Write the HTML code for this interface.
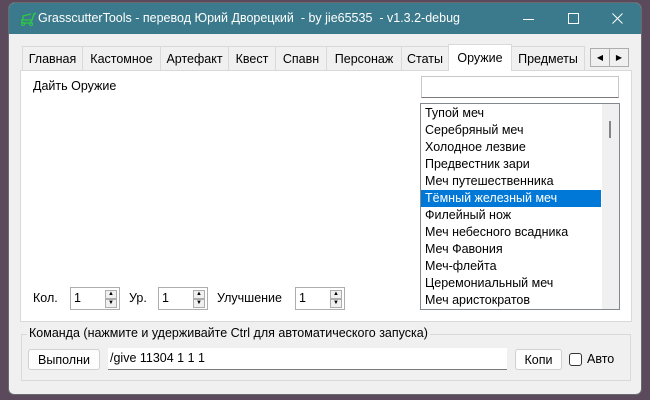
<!DOCTYPE html>
<html><head><meta charset="utf-8"><style>
*{box-sizing:border-box;margin:0;padding:0}
body{width:650px;height:400px;background:#5a4a5c;position:relative;overflow:hidden;font-family:"Liberation Sans",sans-serif;font-size:12.5px;color:#000}
.abs{position:absolute}
#win{left:8px;top:2px;width:634px;height:393px;background:#f0f0f0;border-radius:7px 7px 6px 6px;overflow:hidden;border:1px solid #6a6a70}
#title{left:0;top:0;width:100%;height:31px;background:#3a7a8c;color:#fff;font-size:12.5px}
.tab{top:46px;height:24px;border:1px solid #d9d9d9;border-bottom:none;background:#f0f0f0;padding:5px 0 0 0;text-align:center;font-size:12.5px}
#panel{left:20px;top:70px;width:612px;height:252px;background:#fff;border:1px solid #d9d9d9}
.inp{background:#fff;border:1px solid #7a7a7a}
.spin{height:23px;background:#fff;border:1px solid #adadad;padding:3px 0 0 3px}
.sb{position:absolute;right:2px;width:12px;height:9px;border:1px solid #adadad;background:#f0f0f0;font-size:6px;line-height:7px;text-align:center}
.btn{background:#fdfdfd;border:1px solid #d0d0d0;border-radius:3px;text-align:center;padding-top:3px}
.it{height:17px;padding-left:4px;line-height:17px}
</style></head><body>
<div id="win" class="abs">
<div id="title" class="abs">
<svg class="abs" style="left:10px;top:9px" width="18" height="14" viewBox="0 0 18 14"><path d="M2 8h11l2-6 2-1M4 8V4l8-2M3 8v3h9V8" fill="none" stroke="#2ecc40" stroke-width="1.3"/><circle cx="4" cy="12" r="1.5" fill="none" stroke="#2ecc40"/><circle cx="12" cy="12" r="1.5" fill="none" stroke="#2ecc40"/></svg>
<span class="abs" style="left:29px;top:8px;white-space:pre">GrasscutterTools - перевод Юрий Дворецкий  - by jie65535  - v1.3.2-debug</span>
<div class="abs" style="left:514px;top:16px;width:11px;border-top:1px solid #fff"></div>
<div class="abs" style="left:559px;top:10px;width:11px;height:11px;border:1px solid #fff"></div>
<svg class="abs" style="left:603px;top:10px" width="11" height="11" viewBox="0 0 11 11"><path d="M0.5 0.5L10.5 10.5M10.5 0.5L0.5 10.5" stroke="#fff" stroke-width="1"/></svg>
</div>
</div>
<div id="panel" class="abs"></div>
<div class="abs tab" style="left:22px;width:61px">Главная</div>
<div class="abs tab" style="left:82px;width:79px">Кастомное</div>
<div class="abs tab" style="left:160px;width:69px">Артефакт</div>
<div class="abs tab" style="left:228px;width:48px">Квест</div>
<div class="abs tab" style="left:275px;width:52px">Спавн</div>
<div class="abs tab" style="left:326px;width:76px">Персонаж</div>
<div class="abs tab" style="left:401px;width:48px">Статы</div>
<div class="abs tab" style="left:448px;width:64px;top:44px;height:27px;background:#fff;border-color:#d9d9d9;z-index:2;padding-top:6px">Оружие</div>
<div class="abs tab" style="left:511px;width:74px">Предметы</div>
<div class="abs" style="left:590px;top:48px;width:20px;height:19px;border:1px solid #adadad;background:#f0f0f0;font-size:8px;text-align:center;line-height:17px">◀</div>
<div class="abs" style="left:609px;top:48px;width:20px;height:19px;border:1px solid #adadad;background:#f0f0f0;font-size:8px;text-align:center;line-height:17px">▶</div>
<span class="abs" style="left:33px;top:79px">Дайть Оружие</span>
<div class="abs inp" style="left:421px;top:76px;width:198px;height:22px;border-color:#c8c8c8;border-bottom-color:#7a7a7a"></div>
<div class="abs" style="left:420px;top:103px;width:200px;height:207px;border:1px solid #828790;background:#fff;overflow:hidden;padding-top:1px">
<div class="it">Тупой меч</div><div class="it">Серебряный меч</div><div class="it">Холодное лезвие</div><div class="it">Предвестник зари</div><div class="it">Меч путешественника</div>
<div class="it" style="background:#0078d7;color:#fff;width:180px">Тёмный железный меч</div>
<div class="it">Филейный нож</div><div class="it">Меч небесного всадника</div><div class="it">Меч Фавония</div><div class="it">Меч-флейта</div><div class="it">Церемониальный меч</div><div class="it">Меч аристократов</div>
<div class="abs" style="right:0;top:0;width:17px;height:100%;background:#f0f0f0"></div>
<div class="abs" style="right:8px;top:17px;width:2px;height:17px;background:#858585"></div>
</div>
<span class="abs" style="left:33px;top:291px">Кол.</span>
<div class="abs spin" style="left:70px;top:287px;width:50px">1<div class="sb" style="top:2px">▲</div><div class="sb" style="top:11px">▼</div></div>
<span class="abs" style="left:129px;top:291px">Ур.</span>
<div class="abs spin" style="left:158px;top:287px;width:50px">1<div class="sb" style="top:2px">▲</div><div class="sb" style="top:11px">▼</div></div>
<span class="abs" style="left:217px;top:291px">Улучшение</span>
<div class="abs spin" style="left:295px;top:287px;width:50px">1<div class="sb" style="top:2px">▲</div><div class="sb" style="top:11px">▼</div></div>
<div class="abs" style="left:21px;top:334px;width:610px;height:47px;border:1px solid #d9d9d9"></div>
<span class="abs" style="left:27px;top:326px;background:#f0f0f0;padding:0 2px">Команда (нажмите и удерживайте Ctrl для автоматического запуска)</span>
<div class="abs btn" style="left:28px;top:349px;width:72px;height:21px">Выполни</div>
<div class="abs" style="left:108px;top:348px;width:399px;height:22px;background:#fff;border-bottom:1px solid #7a7a7a;padding:3px 0 0 2px">/give 11304 1 1 1</div>
<div class="abs btn" style="left:515px;top:349px;width:47px;height:21px">Копи</div>
<div class="abs" style="left:569px;top:353px;width:13px;height:13px;border:1px solid #333;border-radius:3px;background:#fff"></div>
<span class="abs" style="left:587px;top:352px">Авто</span>
</body></html>
